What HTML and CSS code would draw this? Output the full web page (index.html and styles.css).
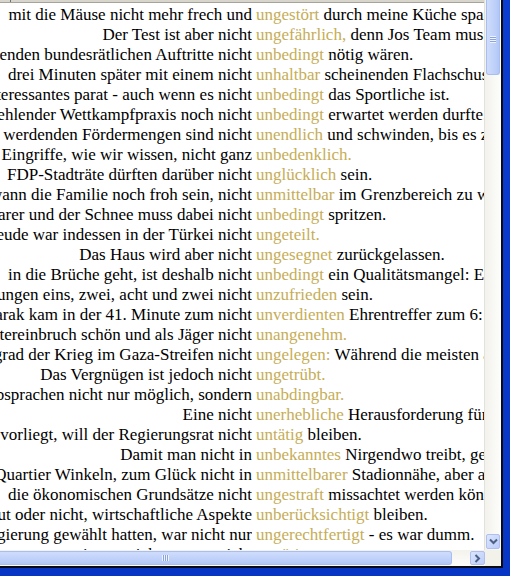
FILE: index.html
```html
<!DOCTYPE html>
<html lang="de">
<head>
<meta charset="utf-8">
<title>Konkordanz</title>
<link rel="stylesheet" href="styles.css">
</head>
<body>
<div class="window">
  <div class="client">
    <div class="main">
      <div class="pane">
        <div class="header"><span class="hcell"></span></div>
        <div class="lines">
          <div class="row"><div class="left"><span>mit die Mäuse nicht mehr frech und</span></div><div class="right"><span class="kw">ungestört</span> durch meine Küche spazieren.</div></div>
          <div class="row"><div class="left"><span>Der Test ist aber nicht</span></div><div class="right"><span class="kw">ungefährlich,</span> denn Jos Team musste sich</div></div>
          <div class="row"><div class="left"><span>stattfindenden bundesrätlichen Auftritte nicht</span></div><div class="right"><span class="kw">unbedingt</span> nötig wären.</div></div>
          <div class="row"><div class="left"><span>drei Minuten später mit einem nicht</span></div><div class="right"><span class="kw">unhaltbar</span> scheinenden Flachschuss ins Tor</div></div>
          <div class="row"><div class="left"><span>etwas Interessantes parat - auch wenn es nicht</span></div><div class="right"><span class="kw">unbedingt</span> das Sportliche ist.</div></div>
          <div class="row"><div class="left"><span>bei fehlender Wettkampfpraxis noch nicht</span></div><div class="right"><span class="kw">unbedingt</span> erwartet werden durfte.</div></div>
          <div class="row"><div class="left"><span>die immer teurer werdenden Fördermengen sind nicht</span></div><div class="right"><span class="kw">unendlich</span> und schwinden, bis es zu spät ist.</div></div>
          <div class="row"><div class="left"><span>Die Eingriffe, wie wir wissen, nicht ganz</span></div><div class="right"><span class="kw">unbedenklich.</span></div></div>
          <div class="row"><div class="left"><span>FDP-Stadträte dürften darüber nicht</span></div><div class="right"><span class="kw">unglücklich</span> sein.</div></div>
          <div class="row"><div class="left"><span>wann die Familie noch froh sein, nicht</span></div><div class="right"><span class="kw">unmittelbar</span> im Grenzbereich zu wohnen.</div></div>
          <div class="row"><div class="left"><span>Der Himmel ist klarer und der Schnee muss dabei nicht</span></div><div class="right"><span class="kw">unbedingt</span> spritzen.</div></div>
          <div class="row"><div class="left"><span>Die Freude war indessen in der Türkei nicht</span></div><div class="right"><span class="kw">ungeteilt.</span></div></div>
          <div class="row"><div class="left"><span>Das Haus wird aber nicht</span></div><div class="right"><span class="kw">ungesegnet</span> zurückgelassen.</div></div>
          <div class="row"><div class="left"><span>in die Brüche geht, ist deshalb nicht</span></div><div class="right"><span class="kw">unbedingt</span> ein Qualitätsmangel: Er ist</div></div>
          <div class="row"><div class="left"><span>Mit den Wertungen eins, zwei, acht und zwei nicht</span></div><div class="right"><span class="kw">unzufrieden</span> sein.</div></div>
          <div class="row"><div class="left"><span>Barak kam in der 41. Minute zum nicht</span></div><div class="right"><span class="kw">unverdienten</span> Ehrentreffer zum 6:1.</div></div>
          <div class="row"><div class="left"><span>Der Wintereinbruch schön und als Jäger nicht</span></div><div class="right"><span class="kw">unangenehm.</span></div></div>
          <div class="row"><div class="left"><span>kam ihnen grad der Krieg im Gaza-Streifen nicht</span></div><div class="right"><span class="kw">ungelegen:</span> Während die meisten anderen</div></div>
          <div class="row"><div class="left"><span>Das Vergnügen ist jedoch nicht</span></div><div class="right"><span class="kw">ungetrübt.</span></div></div>
          <div class="row"><div class="left"><span>Die Absprachen nicht nur möglich, sondern</span></div><div class="right"><span class="kw">unabdingbar.</span></div></div>
          <div class="row"><div class="left"><span>Eine nicht</span></div><div class="right"><span class="kw">unerhebliche</span> Herausforderung für die Stadt.</div></div>
          <div class="row"><div class="left"><span>Da nun ein Bericht vorliegt, will der Regierungsrat nicht</span></div><div class="right"><span class="kw">untätig</span> bleiben.</div></div>
          <div class="row"><div class="left"><span>Damit man nicht in</span></div><div class="right"><span class="kw">unbekanntes</span> Nirgendwo treibt, geht es</div></div>
          <div class="row"><div class="left"><span>in den Quartier Winkeln, zum Glück nicht in</span></div><div class="right"><span class="kw">unmittelbarer</span> Stadionnähe, aber auch</div></div>
          <div class="row"><div class="left"><span>die ökonomischen Grundsätze nicht</span></div><div class="right"><span class="kw">ungestraft</span> missachtet werden können.</div></div>
          <div class="row"><div class="left"><span>Ob gut oder nicht, wirtschaftliche Aspekte</span></div><div class="right"><span class="kw">unberücksichtigt</span> bleiben.</div></div>
          <div class="row"><div class="left"><span>die Regierung gewählt hatten, war nicht nur</span></div><div class="right"><span class="kw">ungerechtfertigt</span> - es war dumm.</div></div>
          <div class="row"><div class="left"><span>wo man sie nun sieht, war es nicht</span></div><div class="right"><span class="kw">unnötig</span> gewesen.</div></div>
        </div>
      </div>
      <div class="vscroll">
        <div class="vthumb"><span class="vgrip"></span></div>
        <div class="vtrack"></div>
        <div class="btn vbtn">
          <svg width="9" height="7" viewBox="0 0 9 7"><path d="M1 1.5 L4.5 5 L8 1.5" fill="none" stroke="#4d6185" stroke-width="2"/></svg>
        </div>
      </div>
    </div>
    <div class="bottom">
      <div class="hscroll">
        <div class="hthumb"><span class="hgrip"></span></div>
        <div class="htrack"></div>
        <div class="btn hbtn">
          <svg width="7" height="9" viewBox="0 0 7 9"><path d="M1.5 1 L5 4.5 L1.5 8" fill="none" stroke="#4d6185" stroke-width="2"/></svg>
        </div>
      </div>
      <div class="corner"></div>
    </div>
  </div>
</div>
</body>
</html>
```
FILE: styles.css
```css
html, body {
  margin: 0;
  padding: 0;
}
body {
  background: #0b3dd0;
  width: 510px;
  height: 576px;
  overflow: hidden;
}
.window {
  width: 510px;
  height: 576px;
  background: linear-gradient(to bottom, #0b3dd0, #0836c4);
}
.client {
  width: 501px;
  height: 566px;
  border-right: 2px solid #0a0a14;
  border-bottom: 2px solid #0a0a14;
  box-shadow: inset -1px -1px 0 #f4f4f0;
  background: #fff;
  display: flex;
  flex-direction: column;
}
.main {
  display: flex;
  height: 550px;
}
.pane {
  width: 485px;
  flex: none;
  display: flex;
  flex-direction: column;
  background: #fff;
  overflow: hidden;
  border-right: 1px solid #e2e2dc;
  box-sizing: border-box;
}
.header {
  height: 3px;
  flex: none;
  background: #d8d5cc;
  border-bottom: 1px solid #a6a39a;
  box-sizing: border-box;
  display: flex;
}
.hcell {
  width: 10px;
  border-right: 1px solid #707070;
}
.lines {
  padding-top: 2px;
  font-family: "Liberation Serif", "Times New Roman", serif;
  font-size: 17px;
  line-height: 20px;
  color: #000;
}
.row {
  display: flex;
  height: 20px;
  white-space: nowrap;
}
.left {
  width: 252px;
  flex: none;
  display: flex;
  justify-content: flex-end;
  overflow: hidden;
}
.left span {
  flex: none;
}
.right {
  margin-left: 4px;
  flex: none;
}
.kw {
  color: #c6ad56;
}
.vscroll {
  width: 16px;
  flex: none;
  display: flex;
  flex-direction: column;
  background: linear-gradient(to right, #f3f2ec, #fdfdfb);
}
.vthumb {
  height: 74px;
  flex: none;
  margin: 0 1px 0 1px;
  background: linear-gradient(to right, #cfdcfc, #bccff9 70%, #b2c7f6);
  border: 1px solid #a8bdf1;
  border-top: none;
  border-radius: 0 0 3px 3px;
  display: flex;
  align-items: center;
  justify-content: center;
}
.vgrip {
  width: 6px;
  height: 7px;
  background: repeating-linear-gradient(to bottom, #eef3fe 0 1px, #8ba4e0 1px 2px);
  margin-top: 4px;
}
.vtrack {
  flex: 1;
}
.btn {
  background: linear-gradient(to bottom right, #dbe5fd, #bccdf9);
  border: 1px solid #aebff0;
  border-radius: 2px;
  display: flex;
  align-items: center;
  justify-content: center;
  box-sizing: border-box;
}
.vbtn {
  height: 15px;
  margin: 0 1px 1px 1px;
}
.bottom {
  display: flex;
  height: 16px;
}
.hscroll {
  width: 485px;
  flex: none;
  display: flex;
  background: linear-gradient(to bottom, #f3f2ec, #fdfdfb);
}
.hthumb {
  width: 452px;
  flex: none;
  margin: 1px 0;
  background: linear-gradient(to bottom, #cfdcfc, #bccff9 70%, #b2c7f6);
  border: 1px solid #a8bdf1;
  border-left: none;
  border-radius: 0 3px 3px 0;
  display: flex;
  align-items: center;
  box-sizing: border-box;
}
.hgrip {
  width: 7px;
  height: 6px;
  margin-left: 162px;
  background: repeating-linear-gradient(to right, #eef3fe 0 1px, #8ba4e0 1px 2px);
}
.htrack {
  flex: 1;
}
.hbtn {
  width: 15px;
  margin: 1px 0;
}
.corner {
  flex: 1;
  background: #f2f1ea;
}
```
